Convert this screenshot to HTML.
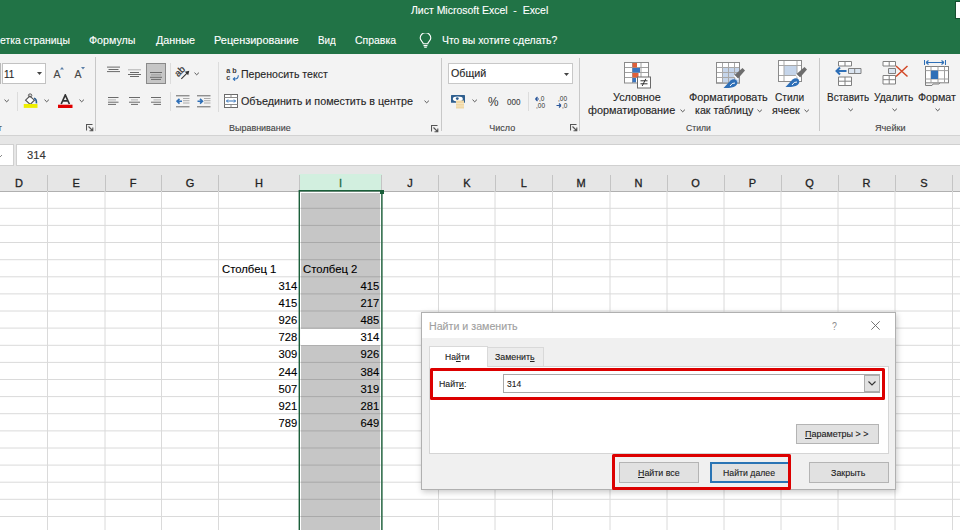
<!DOCTYPE html>
<html><head><meta charset="utf-8">
<style>
*{margin:0;padding:0;box-sizing:border-box}
html,body{width:960px;height:530px;overflow:hidden;background:#fff;font-family:"Liberation Sans",sans-serif;color:#222;position:relative}
.a{position:absolute}
.t{position:absolute;white-space:pre;line-height:1;transform-origin:0 0;-webkit-text-stroke:0.12px currentColor}
u{text-decoration-thickness:1px;text-underline-offset:1px}
</style></head><body>
<div class="a" style="left:0px;top:0px;width:960px;height:53.5px;background:#217346"></div>
<div class="t" style="left:410.8px;top:5.9px;font-size:10px;transform:scaleX(1.046);color:#fff;">Лист Microsoft Excel &nbsp;-&nbsp; Excel</div>
<div class="t" style="left:-0.5px;top:35.1px;font-size:10.5px;transform:scaleX(0.988);color:#fff;">етка страницы</div>
<div class="t" style="left:89.2px;top:35.1px;font-size:10.5px;transform:scaleX(1.017);color:#fff;">Формулы</div>
<div class="t" style="left:155.5px;top:35.1px;font-size:10.5px;transform:scaleX(1.028);color:#fff;">Данные</div>
<div class="t" style="left:213.5px;top:35.1px;font-size:10.5px;transform:scaleX(1.042);color:#fff;">Рецензирование</div>
<div class="t" style="left:317.8px;top:35.1px;font-size:10.5px;transform:scaleX(0.932);color:#fff;">Вид</div>
<div class="t" style="left:354.9px;top:35.1px;font-size:10.5px;transform:scaleX(0.997);color:#fff;">Справка</div>
<div class="t" style="left:441.5px;top:35.1px;font-size:10.5px;transform:scaleX(0.993);color:#fff;">Что вы хотите сделать?</div>
<div class="a" style="left:955px;top:1.3px;width:6px;height:17.8px;background:#fff;border:1px solid #174d30;border-right:none"></div>
<svg class="a" style="left:419px;top:33px" width="13" height="15" viewBox="0 0 13 15"><path d="M4.2 10.8 C4.2 8.8 1.2 7.6 1.2 5 A5.3 5.3 0 0 1 11.8 5 C11.8 7.6 8.8 8.8 8.8 10.8 Z M4.5 12.6 H8.5 M5.2 14.3 H7.8" fill="none" stroke="#fff" stroke-width="1.1"/></svg>
<div class="a" style="left:0px;top:53.5px;width:960px;height:81.5px;background:#f3f3f3"></div>
<div class="a" style="left:0px;top:134.5px;width:960px;height:1px;background:#d2d2d2"></div>
<div class="a" style="left:95px;top:57px;width:1px;height:74px;background:#c8c8c8"></div>
<div class="a" style="left:441px;top:58px;width:1px;height:73px;background:#c8c8c8"></div>
<div class="a" style="left:579px;top:58px;width:1px;height:73px;background:#c8c8c8"></div>
<div class="a" style="left:818.5px;top:58px;width:1px;height:73px;background:#c8c8c8"></div>
<div class="a" style="left:17.4px;top:92px;width:1px;height:19px;background:#dcdcdc"></div>
<div class="a" style="left:169.5px;top:63px;width:1px;height:21px;background:#dcdcdc"></div>
<div class="a" style="left:169.5px;top:92px;width:1px;height:19px;background:#dcdcdc"></div>
<div class="a" style="left:217.5px;top:62px;width:1px;height:50px;background:#dcdcdc"></div>
<div class="a" style="left:527.9px;top:92px;width:1px;height:18.5px;background:#dcdcdc"></div>
<div class="a" style="left:2px;top:63.4px;width:43.8px;height:20.3px;background:#fff;border:1px solid #c2c2c2"></div>
<div class="a" style="left:0px;top:63.4px;width:1px;height:20.3px;background:#b8b8b8"></div>
<div class="t" style="left:4.3px;top:69.0px;font-size:10.5px;transform:scaleX(0.950);color:#262626;">11</div>
<svg class="a" style="left:37px;top:72px" width="5" height="3"><path d="M0 0H5L2.5 3Z" fill="#444"/></svg>
<div class="t" style="left:53.6px;top:68.5px;font-size:10.5px;color:#444;">A</div>
<svg class="a" style="left:60.3px;top:67px" width="4" height="2.5"><path d="M0 2.5L2 0L4 2.5Z" fill="#5b7fa8"/></svg>
<div class="t" style="left:74.6px;top:68.5px;font-size:10.5px;color:#444;">A</div>
<svg class="a" style="left:81.1px;top:67px" width="4" height="2.5"><path d="M0 0H4L2 2.5Z" fill="#5b7fa8"/></svg>
<svg class="a" style="left:4.3px;top:99px" width="6" height="4"><path d="M0.5 0.7L2.7 2.8L4.9 0.7" fill="none" stroke="#555" stroke-width="1"/></svg>
<svg class="a" style="left:22px;top:93px" width="16" height="16" viewBox="0 0 16 16"><path d="M3.6 7.2 L7.8 3 L12.4 7.2 L8.2 11.4 Z" fill="#fff" stroke="#555" stroke-width="1.1"/><ellipse cx="8.1" cy="2.4" rx="1.7" ry="1.5" fill="none" stroke="#555" stroke-width="1"/><path d="M12 5.2 Q14.8 6.2 14.4 10.3" fill="none" stroke="#2f5f8f" stroke-width="1.6"/><rect x="1.75" y="11" width="13.75" height="3.9" fill="#eeee00"/></svg>
<svg class="a" style="left:44.3px;top:99px" width="6" height="4"><path d="M0.5 0.7L2.7 2.8L4.9 0.7" fill="none" stroke="#555" stroke-width="1"/></svg>
<svg class="a" style="left:58px;top:94px" width="15" height="15" viewBox="0 0 15 15"><path d="M3.2 10 L7.3 1 L11.4 10 M4.8 6.8 H9.8" fill="none" stroke="#333" stroke-width="1.7"/><rect x="0" y="10.7" width="14.5" height="3.3" fill="#e00000"/></svg>
<svg class="a" style="left:79.3px;top:99px" width="6" height="4"><path d="M0.5 0.7L2.7 2.8L4.9 0.7" fill="none" stroke="#555" stroke-width="1"/></svg>
<svg class="a" style="left:85.5px;top:124px" width="8" height="8"><path d="M0.5 6.5V0.5H6.5 M2.5 2.5L6.5 6.5 M3.5 6.8H6.8V3.5" fill="none" stroke="#555" stroke-width="1.1"/></svg>
<div class="t" style="left:-9.5px;top:123.9px;font-size:9px;color:#444;">фт</div>
<svg class="a" style="left:106.5px;top:66px" width="22" height="20"><path d="M0 1.1h13" stroke="#6a6a6a" stroke-width="1"/><path d="M1.5 3.5h10" stroke="#6a6a6a" stroke-width="1"/><path d="M0 5.6h13" stroke="#6a6a6a" stroke-width="1"/></svg>
<svg class="a" style="left:127.5px;top:69px" width="22" height="20"><path d="M0 0.8h13" stroke="#b0b0b0" stroke-width="1"/><path d="M2 3.5h9" stroke="#6a6a6a" stroke-width="1"/><path d="M0 5.5h13" stroke="#6a6a6a" stroke-width="1"/><path d="M2 7.5h9" stroke="#6a6a6a" stroke-width="1"/></svg>
<div class="a" style="left:146px;top:63.2px;width:19.8px;height:20.5px;background:#c6c6c6;border:1px solid #8a8a8a"></div>
<svg class="a" style="left:150px;top:72px" width="22" height="20"><path d="M0 0.5h12" stroke="#6a6a6a" stroke-width="1"/><path d="M1 2.9h10" stroke="#9a9a9a" stroke-width="1"/><path d="M0 5.3h12" stroke="#6a6a6a" stroke-width="1"/><path d="M1 7.4h10" stroke="#6a6a6a" stroke-width="1"/></svg>
<svg class="a" style="left:172px;top:62px" width="20" height="20" viewBox="0 0 20 20"><text x="0" y="0" font-size="9.5" font-family="Liberation Sans" fill="#333" stroke="#333" stroke-width="0.25" transform="translate(6.3 15.2) rotate(-45)">ab</text><path d="M9.3 16.8 L15.8 10.3" stroke="#333" stroke-width="1.1"/><path d="M17.3 8.7 L12.8 9.8 L16.2 13.2 Z" fill="#333"/></svg>
<svg class="a" style="left:194.3px;top:72px" width="6" height="4"><path d="M0.5 0.7L2.7 2.8L4.9 0.7" fill="none" stroke="#555" stroke-width="1"/></svg>
<svg class="a" style="left:108px;top:97px" width="22" height="20"><path d="M0 0.5h10.5" stroke="#6a6a6a" stroke-width="1"/><path d="M0 2.9h8" stroke="#b0b0b0" stroke-width="1"/><path d="M0 5.2h10.5" stroke="#6a6a6a" stroke-width="1"/><path d="M0 7.4h8" stroke="#6a6a6a" stroke-width="1"/></svg>
<svg class="a" style="left:129px;top:97px" width="22" height="20"><path d="M0 0.5h11" stroke="#6a6a6a" stroke-width="1"/><path d="M2 2.9h7" stroke="#b0b0b0" stroke-width="1"/><path d="M0 5.2h11" stroke="#6a6a6a" stroke-width="1"/><path d="M2 7.4h7" stroke="#6a6a6a" stroke-width="1"/></svg>
<svg class="a" style="left:151px;top:97px" width="22" height="20"><path d="M0 0.5h10" stroke="#6a6a6a" stroke-width="1"/><path d="M2.5 2.9h7.5" stroke="#b0b0b0" stroke-width="1"/><path d="M0 5.2h10" stroke="#6a6a6a" stroke-width="1"/><path d="M2.5 7.4h7.5" stroke="#6a6a6a" stroke-width="1"/></svg>
<svg class="a" style="left:175.5px;top:94.5px" width="14" height="13" viewBox="0 0 14 13"><path d="M0 0.8H13.5 M0 11.8H13.5" stroke="#666" stroke-width="1"/><path d="M7 3.5H13.5 M7 5.7H13.5 M7 8H13.5" stroke="#aaa" stroke-width="1"/><path d="M1 6.2 H6 M3.5 3.8 L1 6.2 L3.5 8.6" fill="none" stroke="#2e6fb7" stroke-width="1.6"/></svg>
<svg class="a" style="left:197px;top:94.5px" width="14" height="13" viewBox="0 0 14 13"><path d="M0 0.8H13.5 M0 11.8H13.5" stroke="#666" stroke-width="1"/><path d="M7 3.5H13.5 M7 5.7H13.5 M7 8H13.5" stroke="#aaa" stroke-width="1"/><path d="M0.5 6.2 H5.5 M3 3.8 L5.5 6.2 L3 8.6" fill="none" stroke="#2e6fb7" stroke-width="1.6"/></svg>
<svg class="a" style="left:225.5px;top:67.5px" width="14" height="13" viewBox="0 0 14 13"><text x="0.3" y="5.4" font-size="7.2" font-weight="bold" font-family="Liberation Sans" fill="#3a3a3a">a</text><text x="6.3" y="5.4" font-size="7.2" font-weight="bold" font-family="Liberation Sans" fill="#3a3a3a">b</text><text x="0.3" y="11.7" font-size="7.2" font-weight="bold" font-family="Liberation Sans" fill="#3a3a3a">c</text><path d="M12.3 7.3 Q12.3 11 9 11 H7.3 M9 9.3 L7.3 11 L9 12.7" fill="none" stroke="#2e6fb7" stroke-width="1.1"/></svg>
<div class="t" style="left:241.2px;top:68.5px;font-size:10.8px;transform:scaleX(0.978);color:#262626;">Переносить текст</div>
<svg class="a" style="left:224px;top:93.5px" width="14" height="14" viewBox="0 0 14 14"><rect x="0.5" y="0.5" width="13" height="13" fill="#fff" stroke="#6a6a6a"/><path d="M0.5 3.5H13.5 M0.5 10.5H13.5 M7 0.5V3.5 M7 10.5V13.5" stroke="#8a8a8a" stroke-width="1"/><path d="M2.5 7H11.5 M4 5.5 L2.5 7 L4 8.5 M10 5.5 L11.5 7 L10 8.5" fill="none" stroke="#2e6fb7" stroke-width="1"/></svg>
<div class="t" style="left:241.2px;top:96.0px;font-size:10.8px;transform:scaleX(0.996);color:#262626;">Объединить и поместить в центре</div>
<svg class="a" style="left:423.8px;top:99.5px" width="6" height="4"><path d="M0.5 0.7L2.7 2.8L4.9 0.7" fill="none" stroke="#555" stroke-width="1"/></svg>
<div class="t" style="left:229.3px;top:123.9px;font-size:9px;transform:scaleX(0.996);color:#444;">Выравнивание</div>
<svg class="a" style="left:430.5px;top:124.5px" width="8" height="8"><path d="M0.5 6.5V0.5H6.5 M2.5 2.5L6.5 6.5 M3.5 6.8H6.8V3.5" fill="none" stroke="#555" stroke-width="1.1"/></svg>
<div class="a" style="left:448.3px;top:63.2px;width:124.3px;height:20.5px;background:#fff;border:1px solid #c8c8c8"></div>
<div class="t" style="left:451.0px;top:68.3px;font-size:10.8px;transform:scaleX(0.991);color:#262626;">Общий</div>
<svg class="a" style="left:564px;top:72.5px" width="5" height="3"><path d="M0 0H5L2.5 3Z" fill="#444"/></svg>
<svg class="a" style="left:451px;top:94.5px" width="15" height="14" viewBox="0 0 15 14"><rect x="0" y="0" width="14" height="7.8" rx="0.5" fill="#2f5f8f"/><ellipse cx="6.8" cy="3.9" rx="5" ry="2.4" fill="#fff"/><circle cx="6.3" cy="3.6" r="1.4" fill="#2f5f8f"/><rect x="5" y="5.5" width="8" height="8" fill="#f0d7a4"/><path d="M5 8.5H13 M5 11H13" stroke="#f8e8c8" stroke-width="0.8"/></svg>
<svg class="a" style="left:472.3px;top:99px" width="6" height="4"><path d="M0.5 0.7L2.7 2.8L4.9 0.7" fill="none" stroke="#555" stroke-width="1"/></svg>
<div class="t" style="left:487.7px;top:95.6px;font-size:12.5px;transform:scaleX(0.950);color:#333;-webkit-text-stroke:0">%</div>
<div class="t" style="left:507.3px;top:97.6px;font-size:8.5px;transform:scaleX(0.950);color:#444;">000</div>
<svg class="a" style="left:535px;top:94.5px" width="13" height="14" viewBox="0 0 13 14"><text x="4" y="6" font-size="6.5" font-family="Liberation Sans" fill="#333">,0</text><text x="1" y="13" font-size="6.5" font-family="Liberation Sans" fill="#333">,00</text><path d="M0.5 4 H4 M0.5 4 L2.5 2 M0.5 4 L2.5 6" fill="none" stroke="#2b579a" stroke-width="1.2"/></svg>
<svg class="a" style="left:556px;top:94.5px" width="13" height="14" viewBox="0 0 13 14"><text x="2" y="6" font-size="6.5" font-family="Liberation Sans" fill="#333">,00</text><text x="6" y="13" font-size="6.5" font-family="Liberation Sans" fill="#333">,0</text><path d="M0.5 10.5 H5 M5 10.5 L3 8.5 M5 10.5 L3 12.5" fill="none" stroke="#2b579a" stroke-width="1.2"/></svg>
<div class="t" style="left:489.3px;top:124.0px;font-size:9px;color:#444;">Число</div>
<svg class="a" style="left:569.5px;top:124px" width="8" height="8"><path d="M0.5 6.5V0.5H6.5 M2.5 2.5L6.5 6.5 M3.5 6.8H6.8V3.5" fill="none" stroke="#555" stroke-width="1.1"/></svg>
<svg class="a" style="left:624px;top:62px" width="28" height="27" viewBox="0 0 28 27"><rect x="0.5" y="0.5" width="24" height="20.5" fill="#fff"/><path d="M0.5 5.5H24.5 M0.5 10.5H24.5 M0.5 15.5H24.5 M8.5 0.5V21 M17 0.5V21" stroke="#a0a0a0"/><rect x="8.5" y="1" width="4.5" height="4.5" fill="#e0603a"/><rect x="8.5" y="6" width="7.5" height="4.5" fill="#3a75c0"/><rect x="8.5" y="11" width="6" height="4.5" fill="#e0603a"/><rect x="8.5" y="16" width="3.5" height="4.5" fill="#3a75c0"/><rect x="0.5" y="0.5" width="24" height="20.5" fill="none" stroke="#8a8a8a"/><rect x="13.5" y="15" width="13" height="11" fill="#fff" stroke="#6a6a6a"/><path d="M16.5 18.8H23.5 M16.5 21.8H23.5 M21.8 16.8 L18.2 24" stroke="#333" stroke-width="1"/></svg>
<div class="t" style="left:612.8px;top:92.9px;font-size:10.3px;transform:scaleX(1.051);color:#262626;">Условное</div>
<div class="t" style="left:587.5px;top:106.1px;font-size:10.3px;transform:scaleX(1.055);color:#262626;">форматирование</div>
<svg class="a" style="left:679.8px;top:108.5px" width="6" height="4"><path d="M0.5 0.7L2.7 2.8L4.9 0.7" fill="none" stroke="#555" stroke-width="1"/></svg>
<svg class="a" style="left:715px;top:61px" width="31" height="28" viewBox="0 0 31 28"><rect x="1.5" y="1.5" width="23" height="20.5" fill="#fff" stroke="#8a8a8a"/><rect x="7.5" y="6.5" width="17" height="15.5" fill="#c5d5ea"/><path d="M1.5 6.5H24.5 M1.5 11.5H24.5 M1.5 16.5H24.5 M7.5 1.5V22 M13.5 1.5V22 M19.5 1.5V22" stroke="#a8a8a8" stroke-width="1"/><rect x="1.5" y="1.5" width="23" height="20.5" fill="none" stroke="#8a8a8a"/><path d="M27.5 7 L30 9.5 L23 17.5 L19.5 14 Z" fill="#6d6d6d"/><path d="M19 14.5 L23 18.5" stroke="#fff" stroke-width="1.2"/><path d="M8.5 27 L15.5 19.5 Q19 17 21.5 19.5 Q23.5 22.5 20.5 25 Q16.5 27.5 8.5 27 Z" fill="#2e6fb7"/><path d="M15 25 Q17 21.5 20 22" fill="none" stroke="#fff" stroke-width="1"/></svg>
<div class="t" style="left:688.8px;top:92.9px;font-size:10.3px;transform:scaleX(1.054);color:#262626;">Форматировать</div>
<div class="t" style="left:694.6px;top:106.1px;font-size:10.3px;transform:scaleX(1.034);color:#262626;">как таблицу</div>
<svg class="a" style="left:757.3px;top:108.5px" width="6" height="4"><path d="M0.5 0.7L2.7 2.8L4.9 0.7" fill="none" stroke="#555" stroke-width="1"/></svg>
<svg class="a" style="left:776.5px;top:60px" width="31" height="28" viewBox="0 0 31 28"><rect x="1.5" y="0.5" width="23" height="21" fill="#fff" stroke="#8a8a8a"/><rect x="7" y="5.5" width="13" height="10" fill="#c5d5ea"/><path d="M1.5 5.5H24.5 M1.5 15.5H24.5 M7 0.5V21.5 M20 0.5V21.5" stroke="#a8a8a8" stroke-width="1"/><rect x="1.5" y="0.5" width="23" height="21" fill="none" stroke="#8a8a8a"/><path d="M27.5 7 L30 9.5 L23 17.5 L19.5 14 Z" fill="#6d6d6d"/><path d="M19 14.5 L23 18.5" stroke="#fff" stroke-width="1.2"/><path d="M8.5 27 L15.5 19.5 Q19 17 21.5 19.5 Q23.5 22.5 20.5 25 Q16.5 27.5 8.5 27 Z" fill="#2e6fb7"/><path d="M15 25 Q17 21.5 20 22" fill="none" stroke="#fff" stroke-width="1"/></svg>
<div class="t" style="left:774.8px;top:92.9px;font-size:10.3px;transform:scaleX(0.984);color:#262626;">Стили</div>
<div class="t" style="left:771.8px;top:106.1px;font-size:10.3px;transform:scaleX(1.030);color:#262626;">ячеек</div>
<svg class="a" style="left:803.8px;top:108.5px" width="6" height="4"><path d="M0.5 0.7L2.7 2.8L4.9 0.7" fill="none" stroke="#555" stroke-width="1"/></svg>
<div class="t" style="left:685.8px;top:123.9px;font-size:9px;transform:scaleX(0.956);color:#444;">Стили</div>
<svg class="a" style="left:834px;top:60px" width="29" height="27" viewBox="0 0 29 27"><path d="M4.5 1.5H17.5V6H4.5Z M11 1.5V6" fill="#fff" stroke="#808080"/><path d="M14.5 8.5H27V13.5H14.5Z" fill="#dbe5f1" stroke="#808080"/><path d="M20.7 8.5V13.5" stroke="#808080"/><path d="M4.5 17H17.5V25.5H4.5Z M4.5 21.2H17.5 M11 17V25.5" fill="#fff" stroke="#808080"/><path d="M2.5 11 H12.5 M6 7.5 L2.5 11 L6 14.5" fill="none" stroke="#2e6fb7" stroke-width="2"/></svg>
<div class="t" style="left:827.2px;top:92.9px;font-size:10.3px;transform:scaleX(0.969);color:#262626;">Вставить</div>
<svg class="a" style="left:847.8px;top:107.5px" width="6" height="4"><path d="M0.5 0.7L2.7 2.8L4.9 0.7" fill="none" stroke="#555" stroke-width="1"/></svg>
<svg class="a" style="left:881px;top:60px" width="29" height="27" viewBox="0 0 29 27"><path d="M2 1.5H14.5V6H2Z M8.2 1.5V6" fill="#fff" stroke="#808080"/><path d="M7.5 8.5H14.5V13.5H7.5Z" fill="#dbe5f1" stroke="#808080"/><path d="M2 15.5H14.5V24H2Z M2 19.7H14.5 M8.2 15.5V24" fill="#fff" stroke="#808080"/><path d="M15 6 L26.5 16.5 M26.5 6 L15 16.5" stroke="#d24726" stroke-width="1.5"/></svg>
<div class="t" style="left:873.8px;top:92.9px;font-size:10.3px;transform:scaleX(1.002);color:#262626;">Удалить</div>
<svg class="a" style="left:891.8px;top:107.5px" width="6" height="4"><path d="M0.5 0.7L2.7 2.8L4.9 0.7" fill="none" stroke="#555" stroke-width="1"/></svg>
<svg class="a" style="left:923px;top:58px" width="27" height="29" viewBox="0 0 27 29"><path d="M3 4.5H21 M3 4.5 L5.5 2.5 M3 4.5 L5.5 6.5 M21 4.5 L18.5 2.5 M21 4.5 L18.5 6.5" fill="none" stroke="#2e6fb7" stroke-width="1.1"/><path d="M1.5 2V7 M22.5 2V7" stroke="#2e6fb7" stroke-width="1"/><rect x="2.5" y="8.5" width="23" height="16.3" fill="#fff" stroke="#808080"/><path d="M2.5 12.6H25.5 M2.5 21H25.5 M8 8.5V24.8 M15 8.5V24.8 M21.5 8.5V24.8" stroke="#a0a0a0"/><rect x="8" y="12.6" width="7" height="8.4" fill="#2e6fb7"/><path d="M2.5 24.8 V27.5 H9 L10 26 H16 L17 24.8" fill="none" stroke="#808080"/></svg>
<div class="t" style="left:917.6px;top:92.9px;font-size:10.3px;transform:scaleX(1.036);color:#262626;">Формат</div>
<svg class="a" style="left:935.3px;top:107.5px" width="6" height="4"><path d="M0.5 0.7L2.7 2.8L4.9 0.7" fill="none" stroke="#555" stroke-width="1"/></svg>
<div class="t" style="left:875.3px;top:123.9px;font-size:9px;transform:scaleX(1.014);color:#444;">Ячейки</div>
<div class="a" style="left:0px;top:135.5px;width:960px;height:38.5px;background:#e6e6e6"></div>
<div class="a" style="left:0px;top:144px;width:13.5px;height:21.5px;background:#fff;border:1px solid #d0d0d0;border-left:none"></div>
<svg class="a" style="left:0px;top:150px" width="3" height="10"><path d="M0 7 L2 5" stroke="#888"/></svg>
<div class="a" style="left:16px;top:144px;width:944px;height:21.5px;background:#fff;border:1px solid #d0d0d0;border-right:none"></div>
<div class="t" style="left:26.7px;top:150.0px;font-size:11.5px;transform:scaleX(0.975);color:#333;">314</div>
<div class="a" style="left:0px;top:174px;width:960px;height:16.5px;background:#e6e6e6"></div>
<div class="a" style="left:0px;top:190.5px;width:960px;height:339.5px;background:#fff"></div>
<div class="a" style="left:299px;top:174px;width:82.5px;height:16.5px;background:#d2efdf"></div>
<div class="t" style="left:-1.1px;top:178.1px;width:40px;text-align:center;font-size:11px;color:#222;-webkit-text-stroke:0.3px #222">D</div>
<div class="t" style="left:56.2px;top:178.1px;width:40px;text-align:center;font-size:11px;color:#222;-webkit-text-stroke:0.3px #222">E</div>
<div class="t" style="left:113.2px;top:178.1px;width:40px;text-align:center;font-size:11px;color:#222;-webkit-text-stroke:0.3px #222">F</div>
<div class="t" style="left:170.0px;top:178.1px;width:40px;text-align:center;font-size:11px;color:#222;-webkit-text-stroke:0.3px #222">G</div>
<div class="t" style="left:239.0px;top:178.1px;width:40px;text-align:center;font-size:11px;color:#222;-webkit-text-stroke:0.3px #222">H</div>
<div class="t" style="left:320.5px;top:178.1px;width:40px;text-align:center;font-size:11px;color:#1d6b41;-webkit-text-stroke:0.3px #1d6b41">I</div>
<div class="t" style="left:390.0px;top:178.1px;width:40px;text-align:center;font-size:11px;color:#222;-webkit-text-stroke:0.3px #222">J</div>
<div class="t" style="left:446.8px;top:178.1px;width:40px;text-align:center;font-size:11px;color:#222;-webkit-text-stroke:0.3px #222">K</div>
<div class="t" style="left:503.8px;top:178.1px;width:40px;text-align:center;font-size:11px;color:#222;-webkit-text-stroke:0.3px #222">L</div>
<div class="t" style="left:561.2px;top:178.1px;width:40px;text-align:center;font-size:11px;color:#222;-webkit-text-stroke:0.3px #222">M</div>
<div class="t" style="left:618.5px;top:178.1px;width:40px;text-align:center;font-size:11px;color:#222;-webkit-text-stroke:0.3px #222">N</div>
<div class="t" style="left:675.5px;top:178.1px;width:40px;text-align:center;font-size:11px;color:#222;-webkit-text-stroke:0.3px #222">O</div>
<div class="t" style="left:732.5px;top:178.1px;width:40px;text-align:center;font-size:11px;color:#222;-webkit-text-stroke:0.3px #222">P</div>
<div class="t" style="left:789.5px;top:178.1px;width:40px;text-align:center;font-size:11px;color:#222;-webkit-text-stroke:0.3px #222">Q</div>
<div class="t" style="left:846.5px;top:178.1px;width:40px;text-align:center;font-size:11px;color:#222;-webkit-text-stroke:0.3px #222">R</div>
<div class="t" style="left:903.8px;top:178.1px;width:40px;text-align:center;font-size:11px;color:#222;-webkit-text-stroke:0.3px #222">S</div>
<div class="a" style="left:47.0px;top:175px;width:1px;height:15.5px;background:#c4c4c4"></div>
<div class="a" style="left:104.5px;top:175px;width:1px;height:15.5px;background:#c4c4c4"></div>
<div class="a" style="left:161.0px;top:175px;width:1px;height:15.5px;background:#c4c4c4"></div>
<div class="a" style="left:218.0px;top:175px;width:1px;height:15.5px;background:#c4c4c4"></div>
<div class="a" style="left:299.0px;top:175px;width:1px;height:15.5px;background:#c4c4c4"></div>
<div class="a" style="left:381.0px;top:175px;width:1px;height:15.5px;background:#c4c4c4"></div>
<div class="a" style="left:438.0px;top:175px;width:1px;height:15.5px;background:#c4c4c4"></div>
<div class="a" style="left:494.5px;top:175px;width:1px;height:15.5px;background:#c4c4c4"></div>
<div class="a" style="left:552.0px;top:175px;width:1px;height:15.5px;background:#c4c4c4"></div>
<div class="a" style="left:609.5px;top:175px;width:1px;height:15.5px;background:#c4c4c4"></div>
<div class="a" style="left:666.5px;top:175px;width:1px;height:15.5px;background:#c4c4c4"></div>
<div class="a" style="left:723.5px;top:175px;width:1px;height:15.5px;background:#c4c4c4"></div>
<div class="a" style="left:780.5px;top:175px;width:1px;height:15.5px;background:#c4c4c4"></div>
<div class="a" style="left:837.5px;top:175px;width:1px;height:15.5px;background:#c4c4c4"></div>
<div class="a" style="left:894.5px;top:175px;width:1px;height:15.5px;background:#c4c4c4"></div>
<div class="a" style="left:952.0px;top:175px;width:1px;height:15.5px;background:#c4c4c4"></div>
<div class="a" style="left:0px;top:190.5px;width:960px;height:1px;background:#b0b0b0"></div>
<svg class="a" style="left:0;top:0" width="960" height="530"><path d="M0 208.3H960" stroke="#dadada" stroke-width="1"/><path d="M0 225.4H960" stroke="#dadada" stroke-width="1"/><path d="M0 242.5H960" stroke="#dadada" stroke-width="1"/><path d="M0 259.7H960" stroke="#dadada" stroke-width="1"/><path d="M0 276.8H960" stroke="#dadada" stroke-width="1"/><path d="M0 293.9H960" stroke="#dadada" stroke-width="1"/><path d="M0 311.0H960" stroke="#dadada" stroke-width="1"/><path d="M0 328.1H960" stroke="#dadada" stroke-width="1"/><path d="M0 345.3H960" stroke="#dadada" stroke-width="1"/><path d="M0 362.4H960" stroke="#dadada" stroke-width="1"/><path d="M0 379.5H960" stroke="#dadada" stroke-width="1"/><path d="M0 396.6H960" stroke="#dadada" stroke-width="1"/><path d="M0 413.7H960" stroke="#dadada" stroke-width="1"/><path d="M0 430.9H960" stroke="#dadada" stroke-width="1"/><path d="M0 448.0H960" stroke="#dadada" stroke-width="1"/><path d="M0 465.1H960" stroke="#dadada" stroke-width="1"/><path d="M0 482.2H960" stroke="#dadada" stroke-width="1"/><path d="M0 499.3H960" stroke="#dadada" stroke-width="1"/><path d="M0 516.5H960" stroke="#dadada" stroke-width="1"/><path d="M47.5 191V530" stroke="#dadada" stroke-width="1"/><path d="M105.0 191V530" stroke="#dadada" stroke-width="1"/><path d="M161.5 191V530" stroke="#dadada" stroke-width="1"/><path d="M218.5 191V530" stroke="#dadada" stroke-width="1"/><path d="M299.5 191V530" stroke="#dadada" stroke-width="1"/><path d="M381.5 191V530" stroke="#dadada" stroke-width="1"/><path d="M438.5 191V530" stroke="#dadada" stroke-width="1"/><path d="M495.0 191V530" stroke="#dadada" stroke-width="1"/><path d="M552.5 191V530" stroke="#dadada" stroke-width="1"/><path d="M610.0 191V530" stroke="#dadada" stroke-width="1"/><path d="M667.0 191V530" stroke="#dadada" stroke-width="1"/><path d="M724.0 191V530" stroke="#dadada" stroke-width="1"/><path d="M781.0 191V530" stroke="#dadada" stroke-width="1"/><path d="M838.0 191V530" stroke="#dadada" stroke-width="1"/><path d="M895.0 191V530" stroke="#dadada" stroke-width="1"/><path d="M952.5 191V530" stroke="#dadada" stroke-width="1"/></svg>
<div class="a" style="left:301px;top:192.5px;width:79px;height:337.5px;background:#c6c6c6"></div>
<svg class="a" style="left:0;top:0" width="960" height="530"><path d="M301 208.3H380" stroke="#a9a9a9" stroke-width="1"/><path d="M301 225.4H380" stroke="#a9a9a9" stroke-width="1"/><path d="M301 242.5H380" stroke="#a9a9a9" stroke-width="1"/><path d="M301 259.7H380" stroke="#a9a9a9" stroke-width="1"/><path d="M301 276.8H380" stroke="#a9a9a9" stroke-width="1"/><path d="M301 293.9H380" stroke="#a9a9a9" stroke-width="1"/><path d="M301 311.0H380" stroke="#a9a9a9" stroke-width="1"/><path d="M301 328.1H380" stroke="#a9a9a9" stroke-width="1"/><path d="M301 345.3H380" stroke="#a9a9a9" stroke-width="1"/><path d="M301 362.4H380" stroke="#a9a9a9" stroke-width="1"/><path d="M301 379.5H380" stroke="#a9a9a9" stroke-width="1"/><path d="M301 396.6H380" stroke="#a9a9a9" stroke-width="1"/><path d="M301 413.7H380" stroke="#a9a9a9" stroke-width="1"/><path d="M301 430.9H380" stroke="#a9a9a9" stroke-width="1"/><path d="M301 448.0H380" stroke="#a9a9a9" stroke-width="1"/><path d="M301 465.1H380" stroke="#a9a9a9" stroke-width="1"/><path d="M301 482.2H380" stroke="#a9a9a9" stroke-width="1"/><path d="M301 499.3H380" stroke="#a9a9a9" stroke-width="1"/><path d="M301 516.5H380" stroke="#a9a9a9" stroke-width="1"/></svg>
<div class="a" style="left:301px;top:328.6px;width:79px;height:16.6px;background:#fff"></div>
<svg class="a" style="left:0;top:0" width="960" height="530"><path d="M299.3 190V530 M381.9 190V530 M298.6 190.7H382.6" stroke="#1b5f3a" stroke-width="1.4" fill="none"/></svg>
<div class="a" style="left:379.9px;top:190.4px;width:3.9px;height:3.7px;background:#1b5f3a"></div>
<div class="t" style="left:221.6px;top:263.5px;font-size:11.5px;transform:scaleX(0.983);color:#000;">Столбец 1</div>
<div class="t" style="left:302.6px;top:263.5px;font-size:11.5px;transform:scaleX(0.983);color:#000;">Столбец 2</div>
<div class="t" style="right:663.2px;top:280.9px;font-size:11.5px;color:#000;transform:scaleX(.975);transform-origin:100% 0">314</div>
<div class="t" style="right:580.8px;top:280.9px;font-size:11.5px;color:#000;transform:scaleX(.975);transform-origin:100% 0">415</div>
<div class="t" style="right:663.2px;top:298.0px;font-size:11.5px;color:#000;transform:scaleX(.975);transform-origin:100% 0">415</div>
<div class="t" style="right:580.8px;top:298.0px;font-size:11.5px;color:#000;transform:scaleX(.975);transform-origin:100% 0">217</div>
<div class="t" style="right:663.2px;top:315.1px;font-size:11.5px;color:#000;transform:scaleX(.975);transform-origin:100% 0">926</div>
<div class="t" style="right:580.8px;top:315.1px;font-size:11.5px;color:#000;transform:scaleX(.975);transform-origin:100% 0">485</div>
<div class="t" style="right:663.2px;top:332.2px;font-size:11.5px;color:#000;transform:scaleX(.975);transform-origin:100% 0">728</div>
<div class="t" style="right:580.8px;top:332.2px;font-size:11.5px;color:#000;transform:scaleX(.975);transform-origin:100% 0">314</div>
<div class="t" style="right:663.2px;top:349.3px;font-size:11.5px;color:#000;transform:scaleX(.975);transform-origin:100% 0">309</div>
<div class="t" style="right:580.8px;top:349.3px;font-size:11.5px;color:#000;transform:scaleX(.975);transform-origin:100% 0">926</div>
<div class="t" style="right:663.2px;top:366.5px;font-size:11.5px;color:#000;transform:scaleX(.975);transform-origin:100% 0">244</div>
<div class="t" style="right:580.8px;top:366.5px;font-size:11.5px;color:#000;transform:scaleX(.975);transform-origin:100% 0">384</div>
<div class="t" style="right:663.2px;top:383.6px;font-size:11.5px;color:#000;transform:scaleX(.975);transform-origin:100% 0">507</div>
<div class="t" style="right:580.8px;top:383.6px;font-size:11.5px;color:#000;transform:scaleX(.975);transform-origin:100% 0">319</div>
<div class="t" style="right:663.2px;top:400.7px;font-size:11.5px;color:#000;transform:scaleX(.975);transform-origin:100% 0">921</div>
<div class="t" style="right:580.8px;top:400.7px;font-size:11.5px;color:#000;transform:scaleX(.975);transform-origin:100% 0">281</div>
<div class="t" style="right:663.2px;top:417.8px;font-size:11.5px;color:#000;transform:scaleX(.975);transform-origin:100% 0">789</div>
<div class="t" style="right:580.8px;top:417.8px;font-size:11.5px;color:#000;transform:scaleX(.975);transform-origin:100% 0">649</div>
<div class="a" style="left:421px;top:312px;width:474.8px;height:178.3px;background:#f0f0f0;border:1px solid #b0b0b0;box-shadow:1px 2px 6px rgba(0,0,0,.22)"></div>
<div class="a" style="left:422px;top:313px;width:472.8px;height:25px;background:#fff"></div>
<div class="t" style="left:429.2px;top:321.5px;font-size:10px;transform:scaleX(1.065);color:#a0a0a0;">Найти и заменить</div>
<div class="t" style="left:831.8px;top:320.5px;font-size:11px;transform:scaleX(0.800);color:#8a8a8a;-webkit-text-stroke:0">?</div>
<svg class="a" style="left:870.5px;top:321px" width="9" height="9"><path d="M0.3 0.3L8.7 8.7M8.7 0.3L0.3 8.7" stroke="#666" stroke-width="0.9"/></svg>
<div class="a" style="left:428.5px;top:365.8px;width:460.3px;height:88px;background:#fff;border:1px solid #d5d5d5"></div>
<div class="a" style="left:487.2px;top:347.3px;width:57.2px;height:19px;background:#ececec;border:1px solid #d9d9d9;border-bottom:none"></div>
<div class="a" style="left:429px;top:346px;width:58.6px;height:21px;background:#fff;border:1px solid #d9d9d9;border-bottom:none"></div>
<div class="t" style="left:445.1px;top:352.5px;font-size:9px;transform:scaleX(0.950);color:#222;">На<u>й</u>ти</div>
<div class="t" style="left:494.6px;top:352.9px;font-size:9px;transform:scaleX(0.978);color:#222;">Заменит<u>ь</u></div>
<div class="a" style="left:429.7px;top:367.6px;width:455px;height:32px;border:3px solid #dc0000;border-radius:1.5px"></div>
<div class="t" style="left:439.0px;top:379.8px;font-size:9px;transform:scaleX(0.970);color:#222;">Найт<u>и</u>:</div>
<div class="a" style="left:503.3px;top:374px;width:377px;height:18.5px;background:#fff;border:1px solid #a9a9a9"></div>
<div class="t" style="left:507.2px;top:379.6px;font-size:9px;transform:scaleX(0.940);color:#222;">314</div>
<div class="a" style="left:864.3px;top:374.8px;width:15.5px;height:17.5px;background:#e1e1e1;border:1px solid #adadad"></div>
<svg class="a" style="left:868px;top:381px" width="8" height="5"><path d="M0.5 0.5L4 4L7.5 0.5" fill="none" stroke="#333" stroke-width="1.1"/></svg>
<div class="a" style="left:796.1px;top:423.6px;width:82.7px;height:20px;background:#e1e1e1;border:1px solid #b4b4b4"></div>
<div class="t" style="left:805.1px;top:430.4px;font-size:9px;color:#222;"><u>П</u>араметры &gt; &gt;</div>
<div class="a" style="left:618.9px;top:462.2px;width:79.8px;height:20.5px;background:#e1e1e1;border:1px solid #b4b4b4"></div>
<div class="t" style="left:637.7px;top:468.7px;font-size:9px;transform:scaleX(0.982);color:#222;"><u>Н</u>айти все</div>
<div class="a" style="left:709.5px;top:461.8px;width:81px;height:21px;background:#e1e1e1;border:2px solid #2a74b4"></div>
<div class="t" style="left:723.2px;top:468.7px;font-size:9px;transform:scaleX(0.968);color:#222;">Найти <u>д</u>алее</div>
<div class="a" style="left:809.2px;top:462.3px;width:79.5px;height:20.4px;background:#e1e1e1;border:1px solid #b4b4b4"></div>
<div class="t" style="left:831.4px;top:468.7px;font-size:9px;transform:scaleX(0.989);color:#222;">Закрыть</div>
<div class="a" style="left:612.4px;top:453.6px;width:178.6px;height:36.2px;border:3px solid #dc0000;border-radius:1.5px"></div>
</body></html>
